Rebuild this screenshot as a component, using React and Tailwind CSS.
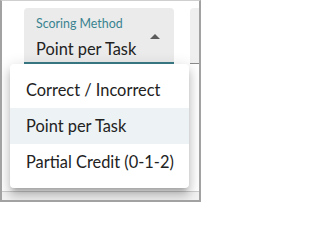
import { useState } from 'react'

const options = ['Correct / Incorrect', 'Point per Task', 'Partial Credit (0-1-2)']

function ArrowUp() {
  return (
    <svg width="10" height="5" viewBox="0 0 10 5" className="shrink-0">
      <path d="M0 5 L5 0 L10 5 Z" fill="#5c5c5c" />
    </svg>
  )
}

export default function App() {
  const [value, setValue] = useState('Point per Task')

  return (
    <div
      className="relative w-[201px] h-[202px] overflow-hidden bg-white border-x-2 border-t border-b-2 border-x-[#a2a2a2] border-t-[#cfcfcf] border-b-[#a2a2a2]"
      style={{ fontFamily: 'Lato, "Noto Sans", sans-serif' }}
    >
      <div className="flex flex-col h-full">
        {/* field row */}
        <div className="flex pt-[7px] pl-[22px] gap-4">
          <div className="w-[150px] h-[56px] shrink-0 rounded-t bg-[#ebebeb] border-b-2 border-[#3b7d88] flex items-start justify-between pl-3 pr-[14px]">
            <div className="flex flex-col pt-[9px] whitespace-nowrap">
              <span className="text-[12.4px] leading-[14px] text-[#3a8390]">Scoring Method</span>
              <span className="text-[16.4px] leading-[23px] mt-[6px] text-[#222]">{value}</span>
            </div>
            <div className="pt-[26px]">
              <ArrowUp />
            </div>
          </div>
          <div className="flex-1 h-[56px] rounded-tl bg-[#efefef] border-b border-[#8a8a8a]" />
        </div>
        <div className="flex-1" />
        <div className="h-[9px] border-t border-[#cdcdcd] bg-[#f2f2f2]" />
      </div>

      {/* open menu */}
      <ul className="absolute left-[8px] top-[63px] w-[179px] py-2 bg-white rounded shadow-[0px_5px_5px_-3px_rgba(0,0,0,0.2),0px_8px_10px_1px_rgba(0,0,0,0.14),0px_3px_14px_2px_rgba(0,0,0,0.12)]">
        {options.map(o => (
          <li
            key={o}
            onClick={() => setValue(o)}
            className={o === value
              ? 'h-9 flex items-center px-4 whitespace-nowrap text-[16.4px] text-[#222] bg-[#edf2f4] cursor-pointer'
              : 'h-9 flex items-center px-4 whitespace-nowrap text-[16.4px] text-[#222] cursor-pointer'}
          >
            {o}
          </li>
        ))}
      </ul>
    </div>
  )
}
